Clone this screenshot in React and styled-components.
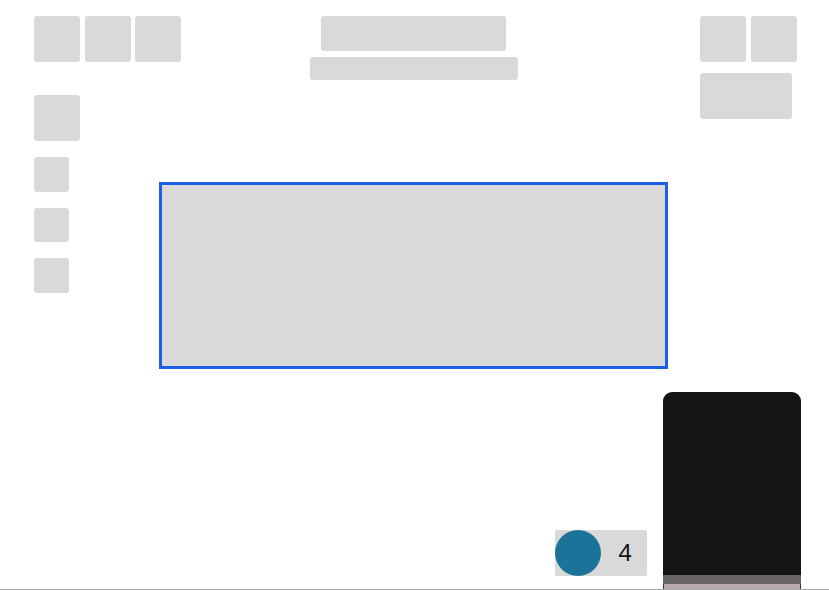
import styled, { createGlobalStyle } from "styled-components";

const GlobalStyle = createGlobalStyle`
  html, body {
    margin: 0;
    padding: 0;
    background: #ffffff;
    font-family: "Noto Sans", "Open Sans", sans-serif;
  }
  * {
    box-sizing: border-box;
  }
`;

const Page = styled.div`
  width: 829px;
  height: 590px;
  padding: 16px 32px 0 34px;
  border-bottom: 1px solid #a9a9a9;
  display: grid;
  grid-template-columns: 125px 509px 1fr;
  grid-template-rows: auto auto 1fr;
  overflow: hidden;
`;

const Block = styled.div`
  width: ${(p) => p.$w}px;
  height: ${(p) => p.$h}px;
  background: #d9d9d9;
  border-radius: 3px;
  flex-shrink: 0;
`;

const Sidebar = styled.div`
  grid-column: 1;
  grid-row: 1 / 3;
  display: flex;
  flex-direction: column;
  align-items: flex-start;
  gap: 16px;
`;

const ToolRow = styled.div`
  display: flex;
  gap: ${(p) => p.$gap || 4.6}px;
  margin-bottom: ${(p) => p.$mb || 0}px;
`;

const TitleGroup = styled.div`
  grid-column: 2;
  grid-row: 1;
  display: flex;
  flex-direction: column;
  align-items: center;
  gap: 6px;
`;

const RightGroup = styled.div`
  grid-column: 3;
  grid-row: 1;
  justify-self: end;
  display: flex;
  flex-direction: column;
  align-items: flex-start;
  gap: 10.7px;
`;

const Canvas = styled.div`
  grid-column: 2;
  grid-row: 2;
  margin-top: 63px;
  height: 187px;
  background: #d9d9d9;
  border: 3px solid #1c5fe6;
`;

const BottomRow = styled.div`
  grid-column: 1 / 4;
  grid-row: 3;
  align-self: end;
  display: flex;
  justify-content: flex-end;
  align-items: flex-end;
  gap: 16px;
  margin-right: -3.5px;
`;

const Pill = styled.div`
  display: flex;
  align-items: center;
  width: 92px;
  height: 46px;
  margin-bottom: 13.3px;
  background: #d9d9d9;
  border-radius: 2px;
`;

const Dot = styled.div`
  width: 46px;
  height: 46px;
  border-radius: 50%;
  background: #1c7399;
  flex-shrink: 0;
`;

const Count = styled.span`
  flex: 1;
  text-align: center;
  font-size: 23px;
  line-height: 1;
  color: #111111;
  padding-left: 2px;
`;

const Preview = styled.div`
  width: 137.5px;
  height: 197.3px;
  display: flex;
  flex-direction: column;
  border-radius: 9px 9px 0 0;
  overflow: hidden;
  background: #161414;
`;

const Screen = styled.div`
  flex: 1;
`;

const Band = styled.div`
  height: ${(p) => p.$h}px;
  background: ${(p) => p.$bg};
  border-left: ${(p) => (p.$edge ? "1px solid #3a3434" : "none")};
  border-right: ${(p) => (p.$edge ? "1px solid #3a3434" : "none")};
`;

export default function App() {
  return (
    <>
      <GlobalStyle />
      <Page>
        <Sidebar>
          <ToolRow $mb={17}>
            <Block $w={46} $h={46} />
            <Block $w={46} $h={46} />
            <Block $w={46} $h={46} />
          </ToolRow>
          <Block $w={46} $h={46} />
          <Block $w={34.7} $h={34.7} />
          <Block $w={34.7} $h={34.7} />
          <Block $w={34.7} $h={34.7} />
        </Sidebar>

        <TitleGroup>
          <Block $w={185} $h={34.7} />
          <Block $w={208} $h={23.3} />
        </TitleGroup>

        <RightGroup>
          <ToolRow $gap={4.3}>
            <Block $w={46.3} $h={46.3} />
            <Block $w={46.3} $h={46.3} />
          </ToolRow>
          <Block $w={92.3} $h={46.3} />
        </RightGroup>

        <Canvas />

        <BottomRow>
          <Pill>
            <Dot />
            <Count>4</Count>
          </Pill>
          <Preview>
            <Screen />
            <Band $h={9} $bg="#6b6666" />
            <Band $h={5} $bg="#b9abab" $edge />
          </Preview>
        </BottomRow>
      </Page>
    </>
  );
}
